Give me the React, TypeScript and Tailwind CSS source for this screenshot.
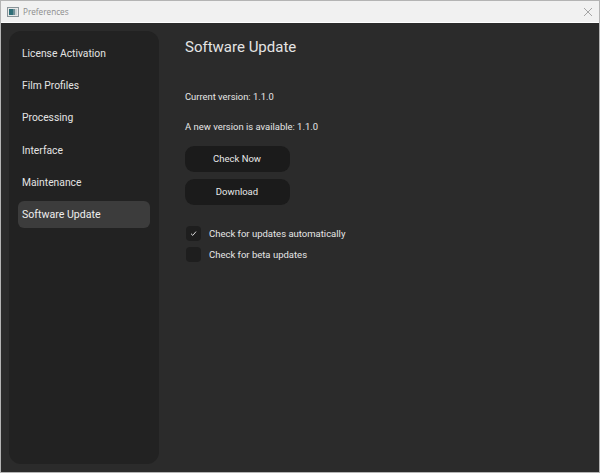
import React from "react";

const items = [
  { label: "License Activation", cls: "text-[10.3px] text-[#e4e4e4]" },
  { label: "Film Profiles", cls: "text-[10.3px] text-[#e4e4e4]" },
  { label: "Processing", cls: "text-[10.3px] text-[#e4e4e4]" },
  { label: "Interface", cls: "text-[10.3px] text-[#e4e4e4] pt-[1px]" },
  { label: "Maintenance", cls: "text-[10.3px] text-[#e4e4e4]" },
  { label: "Software Update", cls: "text-[10.6px] bg-[#3c3c3c] text-[#eeeeee] pt-[1px]" },
];

function AppIcon() {
  return (
    <svg width="12" height="12" viewBox="0 0 12 12" className="shrink-0">
      <rect x="0.5" y="1.5" width="11" height="9" fill="#e8e8e8" stroke="#8a9499" />
      <rect x="2" y="3" width="4" height="6" fill="#2f6f78" />
      <rect x="6" y="3" width="2" height="6" fill="#6f8f96" />
      <rect x="8" y="3" width="2" height="6" fill="#c9d0d2" />
    </svg>
  );
}

export default function App() {
  return (
    <div className="w-[600px] h-[473px] flex flex-col border border-[#b4b4b4] bg-[#2b2b2b] overflow-hidden font-['Roboto',sans-serif]">
      <div className="h-[21px] shrink-0 bg-[#f1f1f1] flex items-center pl-[6px] pr-[6px] gap-[4px]">
        <AppIcon />
        <span className="pt-[1px] text-[8.2px] text-[#8c8c8c] font-['Open_Sans',sans-serif]">Preferences</span>
        <svg width="10" height="10" viewBox="0 0 10 10" className="ml-auto">
          <path d="M1 1L9 9M9 1L1 9" stroke="#a5a5a5" strokeWidth="1" fill="none" />
        </svg>
      </div>
      <div className="h-[1px] shrink-0 bg-[#ffffff]" />
      <div className="flex-1 flex pl-[8px] pt-[8px] pb-[8px] min-h-0">
        <div className="w-[150px] shrink-0 bg-[#222222] rounded-[12px] px-[9px] pt-[9px] flex flex-col gap-[5.2px]">
          {items.map((t) => (
            <div key={t.label} className={"h-[27px] shrink-0 rounded-[6px] pl-[4px] flex items-center " + t.cls}>
              {t.label}
            </div>
          ))}
        </div>
        <div className="flex-1 pl-[26px] flex flex-col items-start">
          <h1 className="mt-[6px] text-[15px] leading-[20px] text-[#e4e4e4]">Software Update</h1>
          <p className="mt-[33px] text-[9.4px] leading-[14px] text-[#e6e6e6]">Current version: 1.1.0</p>
          <p className="mt-[16px] text-[9.45px] leading-[14px] text-[#e6e6e6]">A new version is available: 1.1.0</p>
          <button className="mt-[12px] w-[105px] h-[26px] rounded-[9px] bg-[#1b1b1b] text-[9.5px] text-[#e8e8e8] pt-[1px] pr-[1px]">Check Now</button>
          <button className="mt-[7px] w-[105px] h-[26px] rounded-[9px] bg-[#1b1b1b] text-[9.5px] text-[#e8e8e8] pt-[1px] pr-[1px]">Download</button>
          <label className="mt-[21px] flex items-center gap-[8px] text-[9.5px] text-[#e6e6e6]">
            <span className="ml-[1px] w-[15px] h-[15px] rounded-[4px] bg-[#1e1e1e] flex items-center justify-center">
              <svg width="7" height="7" viewBox="0 0 7 7">
                <path d="M1 3.7L2.8 5.4L6 1.6" stroke="#d8d8d8" strokeWidth="1" fill="none" />
              </svg>
            </span>
            <span className="pt-[1px]">Check for updates automatically</span>
          </label>
          <label className="mt-[6px] flex items-center gap-[8px] text-[9.5px] text-[#e6e6e6]">
            <span className="ml-[1px] w-[15px] h-[15px] rounded-[4px] bg-[#1e1e1e]" />
            <span className="pt-[1px]">Check for beta updates</span>
          </label>
        </div>
      </div>
    </div>
  );
}
